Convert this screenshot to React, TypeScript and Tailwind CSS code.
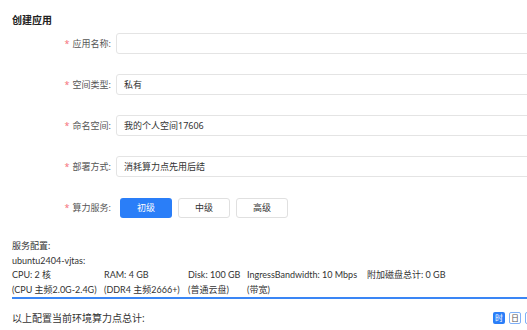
import React from "react";

const font = { fontFamily: '"Noto Sans", "Noto Sans CJK SC", sans-serif' };
const font2 = { fontFamily: 'Lato, "Noto Sans CJK SC", sans-serif' };

function Label({ label }: { label: string }) {
  return (
    <div className="w-[104px] shrink-0 flex justify-end items-center pr-[5px] text-[9px] text-[#555]">
      <span className="text-[#f5727a] text-[9px] mr-[3px] leading-none">*</span>
      <span>{label}:</span>
    </div>
  );
}

function Row({ label, value }: { label: string; value?: string }) {
  return (
    <div className="flex items-center h-[21px]">
      <Label label={label} />
      <div className="w-[480px] shrink-0 h-[21px] border border-[#e4e4e4] rounded-[3px] flex items-center pl-[7px] text-[9px] text-[#333]">
        {value}
      </div>
    </div>
  );
}

export default function App() {
  return (
    <div className="w-[527px] h-[330px] overflow-hidden bg-white relative" style={font}>
      <div className="pl-[12px] pt-[12px] w-[640px]">
        <div className="text-[10px] font-bold text-[#222] leading-[16px]">创建应用</div>
        <div className="flex flex-col gap-[20px] mt-[5px]">
          <Row label="应用名称" />
          <Row label="空间类型" value="私有" />
          <Row label="命名空间" value="我的个人空间17606" />
          <Row label="部署方式" value="消耗算力点先用后结" />
          <div className="flex items-center h-[21px]">
            <Label label="算力服务" />
            <div className="flex gap-[6px] ml-[4px]">
              <div className="w-[52px] h-[20px] rounded-[3px] bg-[#2a7ef8] text-white text-[9px] flex items-center justify-center">初级</div>
              <div className="w-[52px] h-[20px] rounded-[3px] border border-[#e0e0e0] text-[#333] text-[9px] flex items-center justify-center">中级</div>
              <div className="w-[52px] h-[20px] rounded-[3px] border border-[#e0e0e0] text-[#333] text-[9px] flex items-center justify-center">高级</div>
            </div>
          </div>
        </div>
        <div className="mt-[21px] text-[9px] leading-[14.5px] text-[#333]" style={font2}>
          <div>服务配置:</div>
          <div>ubuntu2404-vjtas:</div>
          <div className="flex whitespace-nowrap">
            <div className="w-[92px] shrink-0">CPU: 2 核</div>
            <div className="w-[84px] shrink-0">RAM: 4 GB</div>
            <div className="w-[59px] shrink-0">Disk: 100 GB</div>
            <div className="w-[120px] shrink-0">IngressBandwidth: 10 Mbps</div>
            <div>附加磁盘总计: 0 GB</div>
          </div>
          <div className="flex whitespace-nowrap">
            <div className="w-[92px] shrink-0">(CPU 主频2.0G-2.4G)</div>
            <div className="w-[84px] shrink-0">(DDR4 主频2666+)</div>
            <div className="w-[59px] shrink-0">(普通云盘)</div>
            <div className="w-[120px] shrink-0">(带宽)</div>
          </div>
        </div>
        <div className="h-[2px] bg-[#3a86f5] w-[600px]" />
        <div className="flex items-center mt-[12px] h-[14px]">
          <div className="text-[10px] text-[#333] w-[481px] shrink-0">以上配置当前环境算力点总计:</div>
          <div className="flex gap-[4px]">
            <div className="w-[12px] h-[12px] rounded-[2px] bg-[#2a7ef8] text-white text-[8px] flex items-center justify-center leading-none">时</div>
            <div className="w-[12px] h-[12px] rounded-[2px] border border-[#7fb0f7] text-[#555] text-[8px] flex items-center justify-center leading-none">日</div>
            <div className="w-[12px] h-[12px] rounded-[2px] border border-[#7fb0f7]" />
          </div>
        </div>
      </div>
    </div>
  );
}
